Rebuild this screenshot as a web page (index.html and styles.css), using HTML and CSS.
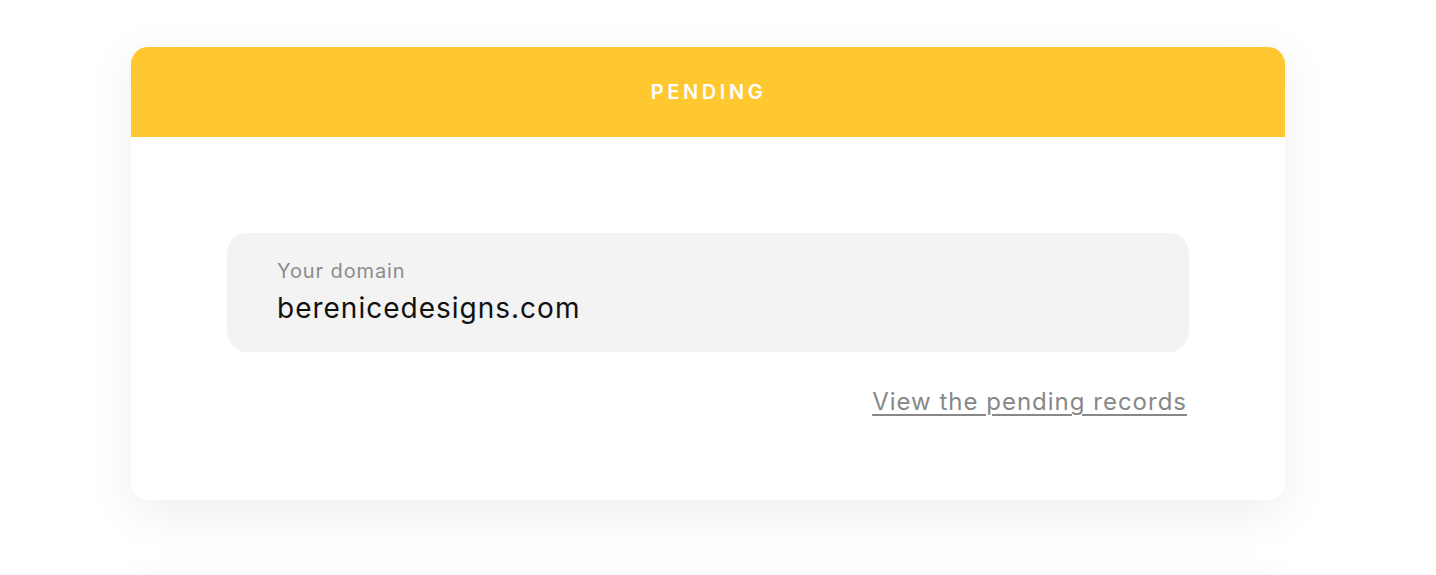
FILE: index.html
```html
<!DOCTYPE html>
<html lang="en">
<head>
<meta charset="utf-8">
<title>Pending</title>
<link rel="stylesheet" href="styles.css">
</head>
<body>
<main class="page">
  <section class="card">
    <header class="card-header">PENDING</header>
    <div class="card-body">
      <div class="domain-box">
        <div class="domain-label">Your domain</div>
        <div class="domain-value">berenicedesigns.com</div>
      </div>
      <div class="link-row">
        <a class="records-link" href="#">View the pending records</a>
      </div>
    </div>
  </section>
  <section class="card next-card"></section>
</main>
</body>
</html>
```

FILE: styles.css
```css
html, body {
  margin: 0;
  padding: 0;
  height: 575px;
  overflow: hidden;
  background: #ffffff;
  font-family: Inter, "Noto Sans", sans-serif;
}

.page {
  padding: 47px 151px 0 131px;
  display: flex;
  flex-direction: column;
  gap: 80px;
}

.card {
  width: 1154px;
  background: #ffffff;
  border-radius: 17px;
  overflow: hidden;
  box-shadow: 0 12px 50px rgba(0, 0, 0, 0.07);
}

.card-header {
  height: 90px;
  background: #ffc730;
  color: #ffffff;
  display: flex;
  align-items: center;
  justify-content: center;
  padding-left: 1px;
  font-size: 20px;
  font-weight: 600;
  letter-spacing: 3.6px;
}

.card-body {
  padding: 96px 96px 82px;
  display: flex;
  flex-direction: column;
}

.domain-box {
  background: #f3f3f3;
  border-radius: 20px;
  height: 119px;
  box-sizing: border-box;
  padding: 26px 50px 0;
  display: flex;
  flex-direction: column;
}

.domain-label {
  font-size: 20px;
  line-height: 24px;
  letter-spacing: 0.9px;
  color: #8c8c8c;
}

.domain-value {
  margin-top: 7px;
  font-size: 28px;
  line-height: 36px;
  letter-spacing: 1px;
  color: #111111;
}

.link-row {
  display: flex;
  justify-content: flex-end;
  margin-top: 34px;
  padding-right: 2px;
}

.records-link {
  font-size: 24px;
  line-height: 32px;
  letter-spacing: 1px;
  color: #888888;
  text-decoration: underline;
  text-underline-offset: 4px;
  text-decoration-thickness: 2px;
}

.next-card {
  height: 300px;
  flex-shrink: 0;
}
```
